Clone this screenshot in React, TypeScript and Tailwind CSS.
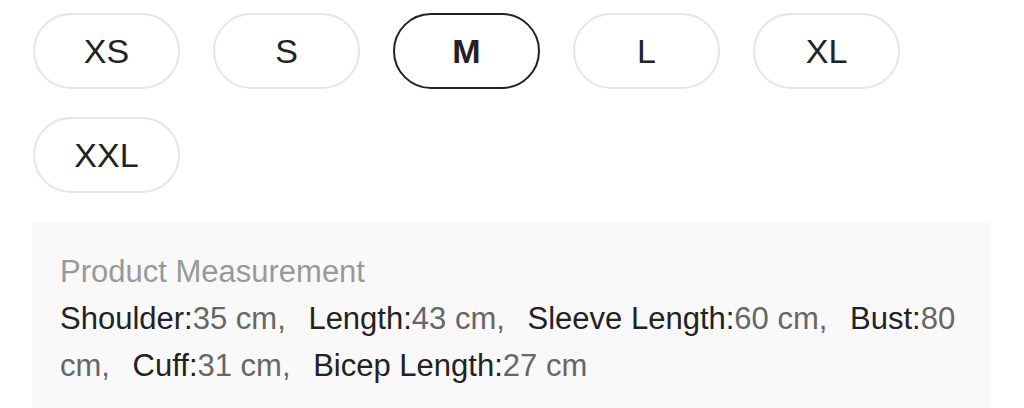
import React from "react";

const sizes = ["XS", "S", "M", "L", "XL", "XXL"];
const selected = "M";

const measures: [string, string][] = [
  ["Shoulder", "35 cm"],
  ["Length", "43 cm"],
  ["Sleeve Length", "60 cm"],
  ["Bust", "80 cm"],
  ["Cuff", "31 cm"],
  ["Bicep Length", "27 cm"],
];

export default function App() {
  return (
    <div
      className="w-[1024px] h-[408px] overflow-hidden bg-white pt-[13px] pl-[32px] pr-[32px]"
      style={{ fontFamily: '"Liberation Sans", Arial, Helvetica, sans-serif' }}
    >
      <div className="flex flex-wrap gap-x-[33px] gap-y-[28px] pl-[1px]">
        {sizes.map((s) => (
          <div
            key={s}
            className={
              s === selected
                ? "w-[147px] h-[76px] rounded-full border-2 border-[#222222] flex items-center justify-center text-[34px] font-bold text-[#222222]"
                : "w-[147px] h-[76px] rounded-full border-2 border-[#e6e6e6] flex items-center justify-center text-[34px] text-[#222222]"
            }
          >
            {s}
          </div>
        ))}
      </div>
      <div className="mt-[29px] w-[959px] bg-[#f9f9f9] pt-[26px] pb-[24px] pl-[28px] pr-[28px] text-[31px] leading-[47px]">
        <div className="text-[#999999]">Product Measurement</div>
        <div>
          {measures.map(([k, v], i) => (
            <React.Fragment key={k}>
              <span className="text-[#222222]">{k}:</span>
              <span className="text-[#666666]">
                {v}
                {i < measures.length - 1 ? (
                  <span className="mr-[14px]">,</span>
                ) : null}
              </span>
              {i < measures.length - 1 ? " " : null}
            </React.Fragment>
          ))}
        </div>
      </div>
    </div>
  );
}
